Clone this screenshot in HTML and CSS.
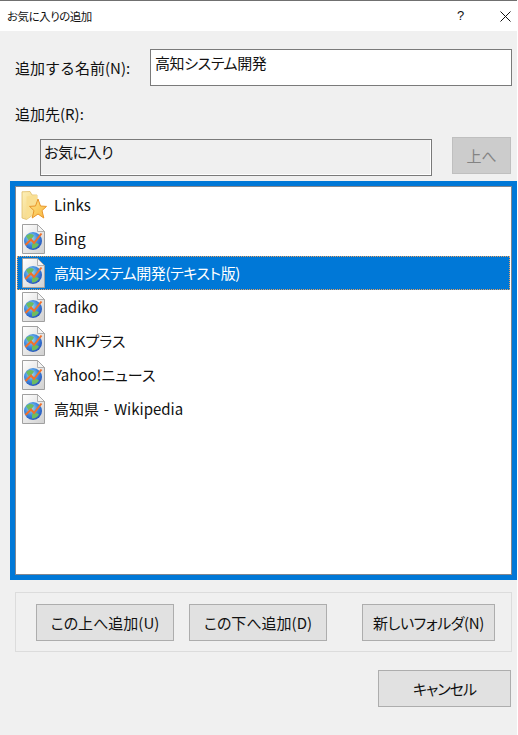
FILE: index.html
```html
<!DOCTYPE html>
<html lang="ja">
<head>
    <meta charset="UTF-8">
    <meta name="viewport" content="width=device-width, initial-scale=1.0">
    <title>お気に入りの追加</title>
    <link rel="stylesheet" href="styles.css">
</head>
<body>

    <!-- Icon definitions -->
    <svg class="defs" width="0" height="0">
        <defs>
            <linearGradient id="folderFill" x1="0" y1="0" x2="1" y2="1">
                <stop offset="0" stop-color="#fdf0b8"/>
                <stop offset="1" stop-color="#f0cd78"/>
            </linearGradient>
            <linearGradient id="pageFill" x1="0" y1="0" x2="1" y2="1">
                <stop offset="0" stop-color="#ffffff"/>
                <stop offset="1" stop-color="#d0d0d0"/>
            </linearGradient>
            <linearGradient id="starFill" x1="0" y1="0" x2="1" y2="1">
                <stop offset="0" stop-color="#fee488"/>
                <stop offset="1" stop-color="#f8b840"/>
            </linearGradient>
            <radialGradient id="globeFill" cx="0.4" cy="0.35" r="0.7">
                <stop offset="0" stop-color="#a4dcf2"/>
                <stop offset="0.55" stop-color="#3f8ade"/>
                <stop offset="1" stop-color="#2450b8"/>
            </radialGradient>
            <symbol id="iconFolder" viewBox="0 0 26 29">
                <path d="M1 0.8 L9 0.5 L11 4 L16 4 L16 21 L5.5 28.5 L1 27 Z" fill="url(#folderFill)" stroke="#e0bc68" stroke-width="0.8"/>
                <path d="M5.5 5.5 L5.5 28 L16 21 L16 4 Z" fill="#f9df92"/>
                <path d="M17 8 L19.5 15 L25.5 15.4 L21 19.6 L22.8 27 L17 23 L11.2 27 L13 19.6 L8.5 15.4 L14.5 15 Z" fill="url(#starFill)" stroke="#e8952a" stroke-width="1"/>
            </symbol>
            <symbol id="iconPage" viewBox="0 0 24 30">
                <path d="M1.5 0.5 L16.5 0.5 L23.5 7.5 L23.5 29.5 L1.5 29.5 Z" fill="url(#pageFill)" stroke="#a0a0a0"/>
                <path d="M16.5 0.5 L16.5 7.5 L23.5 7.5 Z" fill="#f4f4f4" stroke="#a0a0a0" stroke-width="0.8"/>
                <circle cx="12" cy="17" r="9" fill="url(#globeFill)"/>
                <path d="M5 12 Q9 8.5 13 11.5 Q11 15.5 7.5 16 Z M11 20 Q15 18 18 20.5 Q15 25 11 24.5 Z" fill="#6cbc62"/>
                <path d="M4.5 21 L10 15.5 L13 19 L20.5 9.5" fill="none" stroke="#f2702a" stroke-width="2"/>
            </symbol>
        </defs>
    </svg>

    <div class="dialog">

        <!-- Title bar -->
        <header class="titlebar">
            <span class="title">お気に入りの追加</span>
            <span class="help">?</span>
            <svg class="close" width="11" height="11" viewBox="0 0 11 11">
                <path d="M0.5 0.5 L10.5 10.5 M10.5 0.5 L0.5 10.5" stroke="#111" fill="none"/>
            </svg>
        </header>

        <main class="content">

            <div class="name-row">
                <label class="label">追加する名前(N):</label>
                <div class="field name-field">高知システム開発</div>
            </div>

            <div class="label dest-label">追加先(R):</div>

            <div class="dest-row">
                <div class="field dest-field">お気に入り</div>
                <button class="btn btn-up" disabled>上へ</button>
            </div>

            <!-- Favorites list -->
            <div class="list-frame">
                <ul class="list" id="favList">
                    <li class="item">
                        <svg class="icon icon-folder"><use href="#iconFolder"/></svg>
                        <span>Links</span>
                    </li>
                    <li class="item">
                        <svg class="icon"><use href="#iconPage"/></svg>
                        <span>Bing</span>
                    </li>
                    <li class="item selected">
                        <svg class="icon"><use href="#iconPage"/></svg>
                        <span>高知システム開発(テキスト版)</span>
                    </li>
                    <li class="item">
                        <svg class="icon"><use href="#iconPage"/></svg>
                        <span>radiko</span>
                    </li>
                    <li class="item">
                        <svg class="icon"><use href="#iconPage"/></svg>
                        <span>NHKプラス</span>
                    </li>
                    <li class="item">
                        <svg class="icon"><use href="#iconPage"/></svg>
                        <span>Yahoo!ニュース</span>
                    </li>
                    <li class="item">
                        <svg class="icon"><use href="#iconPage"/></svg>
                        <span class="wiki">高知県 - Wikipedia</span>
                    </li>
                </ul>
            </div>

            <!-- Add buttons -->
            <div class="group">
                <button class="btn btn-add">この上へ追加(U)</button>
                <button class="btn btn-add">この下へ追加(D)</button>
                <button class="btn btn-folder">新しいフォルダ(N)</button>
            </div>

            <div class="footer">
                <button class="btn btn-cancel">キャンセル</button>
            </div>

        </main>
    </div>

</body>
</html>
```

FILE: styles.css
```css
/* Basic Reset */
* {
    margin: 0;
    padding: 0;
    box-sizing: border-box;
}

html, body {
    height: 100%;
    overflow: hidden;
}

body {
    font-family: "Noto Sans CJK JP", "Noto Sans", sans-serif;
    font-size: 15px;
    line-height: 20px;
    font-feature-settings: "palt";
    background-color: #f0f0f0;
    color: #111;
}

.defs {
    position: absolute;
}

.dialog {
    height: 100%;
    border-right: 1px solid #fff;
}

/* Title bar */
.titlebar {
    display: flex;
    align-items: center;
    height: 31px;
    padding: 0 6px 0 7px;
    background-color: #fff;
    border-top: 1px solid #707070;
}

.title {
    flex: 1;
    font-size: 11.5px;
    letter-spacing: -0.5px;
}

.help {
    width: 43px;
    font-family: "Liberation Sans", sans-serif;
    font-size: 13px;
}

.close {
    display: block;
}

/* Form */
.content {
    padding: 18px 0 0 15px;
}

.name-row {
    display: flex;
    align-items: center;
    height: 37px;
}

.label {
    width: 135px;
    flex: none;
    font-feature-settings: normal;
}

.field {
    border: 1px solid #7a7a7a;
    height: 37px;
    padding: 3px 4px;
    letter-spacing: -0.4px;
}

.name-field {
    width: 362px;
    background-color: #fff;
}

.dest-label {
    margin-top: 18px;
    height: 20px;
}

.dest-row {
    display: flex;
    align-items: flex-start;
    margin-top: 15px;
    padding-left: 25px;
}

.dest-field {
    width: 392px;
    padding: 2px 3px;
    background-color: #f0f0f0;
    box-shadow: inset -1px -1px 0 #fff;
}

.btn {
    font-family: inherit;
    font-size: 15px;
    line-height: 20px;
    font-feature-settings: "palt";
    height: 37px;
    background-color: #e1e1e1;
    border: 1px solid #adadad;
    color: #111;
}

.btn-up {
    width: 59px;
    margin: -2px 0 0 20px;
    background-color: #ccc;
    border-color: #bfbfbf;
    color: #838383;
}

/* List */
.list-frame {
    width: 507px;
    height: 399px;
    margin: 5px 0 0 -5px;
    border: 5px solid #0078d7;
}

.list {
    list-style: none;
    height: 100%;
    padding: 1px;
    background-color: #fff;
    border: 1px solid #828790;
}

.item {
    display: flex;
    align-items: center;
    gap: 9px;
    height: 34px;
    padding-left: 4px;
}

.item.selected {
    background-color: #0078d7;
    color: #fff;
    outline: 1px dotted #e8a060;
    outline-offset: -1px;
    letter-spacing: -0.4px;
}

.wiki {
    word-spacing: 1.5px;
}

.icon {
    width: 24px;
    height: 30px;
    flex: none;
}

.icon-folder {
    width: 26px;
    height: 29px;
    margin-right: -2px;
}

/* Buttons */
.group {
    display: flex;
    gap: 15px;
    width: 497px;
    height: 60px;
    margin-top: 12px;
    padding: 11px 0 0 20px;
    border: 1px solid #dcdcdc;
}

.btn-add {
    width: 138px;
}

.btn-folder {
    width: 133px;
    margin-left: 20px;
    letter-spacing: -0.4px;
}

.footer {
    display: flex;
    justify-content: flex-end;
    width: 496px;
    margin-top: 18px;
}

.btn-cancel {
    width: 133px;
    letter-spacing: -1px;
}
```
